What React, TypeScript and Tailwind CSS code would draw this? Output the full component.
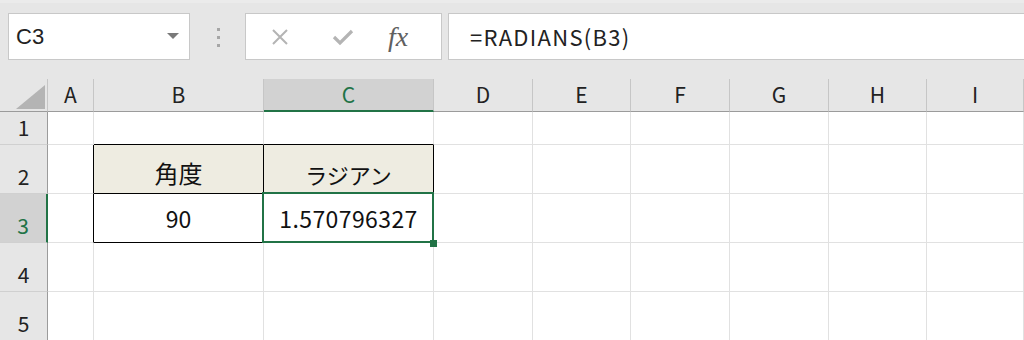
import React from "react";

const cols = ["A", "B", "C", "D", "E", "F", "G", "H", "I"];
const rowHeights = [33, 49, 49, 49, 49];

const font = { fontFamily: '"Noto Sans CJK JP", "Noto Sans", sans-serif' };

function Cell({ r, c }: { r: number; c: number }) {
  let cls = "relative flex items-end justify-center border-r border-b border-[#e1e1e1] bg-white";
  let content: React.ReactNode = null;
  const isTable = (r === 2 || r === 3) && (c === 1 || c === 2);
  if (isTable) {
    cls = "relative flex items-end justify-center border-r border-b border-black";
    cls += r === 2 ? " bg-[#eeece1]" : " bg-white";
  }
  if (r === 1 && (c === 1 || c === 2)) {
    cls = "relative flex items-end justify-center border-r border-b border-r-[#e1e1e1] border-b-black bg-white";
  }
  if ((r === 2 || r === 3) && c === 0) {
    cls = "relative flex items-end justify-center border-r border-b border-r-black border-b-[#e1e1e1] bg-white";
  }
  if (r === 3 && c === 2) cls += " z-10";
  if (r === 2 && c === 1) content = <span className="pb-[8px] text-[24px] leading-none text-[#111]">角度</span>;
  if (r === 2 && c === 2) content = <span className="pb-[8px] text-[22px] leading-none text-[#111]">ラジアン</span>;
  if (r === 3 && c === 1) content = <span className="pb-[12px] text-[23px] leading-none text-[#111]">90</span>;
  if (r === 3 && c === 2)
    content = (
      <>
        <span className="pb-[12px] text-[23px] leading-none tracking-[0.4px] text-[#111]">1.570796327</span>
        <div className="absolute -left-[2px] -top-[2px] -right-[1px] -bottom-[1px] border-2 border-[#217346]" />
        <div className="absolute -right-[4px] -bottom-[5px] h-[7px] w-[7px] bg-[#217346]" />
      </>
    );
  return <div className={cls}>{content}</div>;
}

export default function App() {
  return (
    <div className="h-[340px] w-[1024px] overflow-hidden bg-[#e6e6e6]" style={font}>
      {/* toolbar */}
      <div className="flex h-[79px] items-start border-t-[3px] border-[#ebebeb] pt-[10px]">
        <div className="ml-[8px] flex h-[47px] w-[182px] items-center justify-between border border-[#c8c8c8] bg-white pl-[7px] pr-[10px]">
          <span className="text-[22px] text-[#222]" style={{ fontFamily: '"Liberation Sans", Arial, sans-serif' }}>
            C3
          </span>
          <svg width="12" height="7" viewBox="0 0 12 7">
            <polygon points="0,0 12,0 6,6" fill="#7a7a7a" />
          </svg>
        </div>
        <div className="ml-[26px] mt-[15px] flex w-[4px] flex-col items-center gap-[5px]">
          <div className="h-[3px] w-[3px] bg-[#a6a6a6]" />
          <div className="h-[3px] w-[3px] bg-[#a6a6a6]" />
          <div className="h-[3px] w-[3px] bg-[#a6a6a6]" />
        </div>
        <div className="ml-[25px] flex h-[47px] w-[197px] items-center border border-[#c8c8c8] bg-white">
          <svg className="ml-[25px]" width="18" height="18" viewBox="0 0 18 18">
            <path d="M2 2 L16 16 M16 2 L2 16" stroke="#b4b4b4" strokeWidth="2" fill="none" />
          </svg>
          <svg className="ml-[43px]" width="22" height="18" viewBox="0 0 22 18">
            <path d="M2 9 L8 15 L20 3" stroke="#b4b4b4" strokeWidth="3.2" fill="none" />
          </svg>
          <span
            className="ml-[34px] text-[28px] italic leading-none text-[#606060]"
            style={{ fontFamily: '"Liberation Serif", "Times New Roman", serif' }}
          >
            fx
          </span>
        </div>
        <div className="ml-[6px] flex h-[47px] flex-1 items-center border border-r-0 border-[#c8c8c8] bg-white pl-[21px]">
          <span className="text-[22px] tracking-[1.3px] text-[#222]">=RADIANS(B3)</span>
        </div>
      </div>
      {/* grid */}
      <div className="grid grid-cols-[48px_46px_170px_170px_99px_98px_99px_99px_98px_1fr] grid-rows-[33px_33px_49px_49px_49px_49px]">
        <div className="relative border-r border-b border-r-[#c6c6c6] border-b-[#9b9b9b] bg-[#e6e6e6]">
          <svg className="absolute left-[16px] top-[6px]" width="29" height="24" viewBox="0 0 29 24">
            <polygon points="29,0 29,24 0,24" fill="#b4b4b4" />
          </svg>
        </div>
        {cols.map((c) =>
          c === "C" ? (
            <div
              key={c}
              className="flex items-center justify-center border-r border-b-2 border-r-[#c6c6c6] border-b-[#217346] bg-[#d2d2d2] text-[21px] text-[#217346]"
            >
              {c}
            </div>
          ) : (
            <div
              key={c}
              className="flex items-center justify-center border-r border-b border-r-[#c6c6c6] border-b-[#9b9b9b] bg-[#e6e6e6] text-[21px] text-[#222]"
            >
              {c}
            </div>
          )
        )}
        {rowHeights.map((h, i) => {
          const r = i + 1;
          return (
            <React.Fragment key={r}>
              {r === 3 ? (
                <div className="flex items-end justify-center border-r-2 border-b border-r-[#217346] border-b-[#d0d0d0] bg-[#d2d2d2] pb-[6px] text-[21px] leading-none text-[#217346]">
                  {r}
                </div>
              ) : (
                <div className="flex items-end justify-center border-r border-b border-r-[#9b9b9b] border-b-[#d0d0d0] bg-[#e6e6e6] pb-[6px] text-[21px] leading-none text-[#222]">
                  {r}
                </div>
              )}
              {cols.map((_, c) => (
                <Cell key={c} r={r} c={c} />
              ))}
            </React.Fragment>
          );
        })}
      </div>
    </div>
  );
}
